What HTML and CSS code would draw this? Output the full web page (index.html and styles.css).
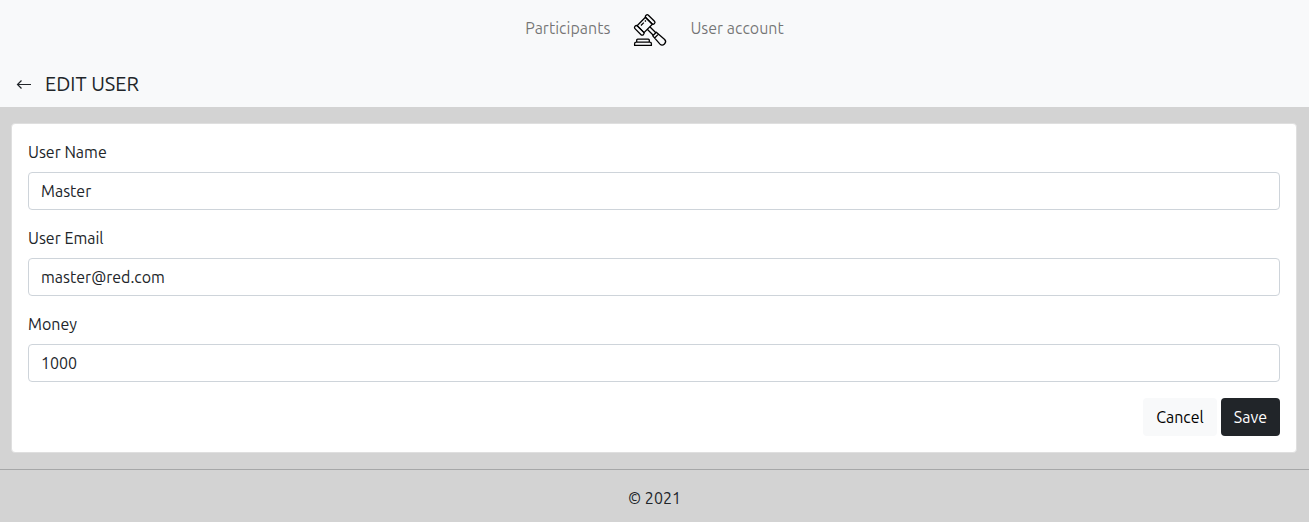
FILE: index.html
```
<!DOCTYPE html>
<html lang="en">
<head>
  <meta charset="utf-8">
  <meta name="viewport" content="width=device-width, initial-scale=1">
  <title>Edit user</title>
  <link rel="stylesheet" href="styles.css">
</head>
<body>
  <header class="header">
    <nav class="nav">
      <a class="nav-link" href="#">Participants</a>
      <a class="brand" href="#" aria-label="Home">
        <svg class="brand-icon" viewBox="0 0 32 32" aria-hidden="true">
          <g transform="rotate(-45 11 10.5)">
            <rect x="1" y="4.700" width="3.600" height="11.800" rx="1.600"/>
            <rect x="16.400" y="4.700" width="3.600" height="11.800" rx="1.600"/>
            <rect x="4.600" y="5.700" width="11.800" height="9.800"/>
            <path d="M7.500 8.300h4M13 8.300h1.500"/>
            <path d="M9.200 15.500v8.500M12.800 15.500v8.500"/>
            <path d="M8.500 24h5l.8 11a3.300 3 0 0 1-6.600 0zM8.300 26.800h5.400"/>
          </g>
          <path d="M2.700 28.200v-2a1 1 0 0 1 1-1h10.600a1 1 0 0 1 1 1v2M.6 31.400v-1.600a1.600 1.600 0 0 1 1.600-1.600h13.600a1.600 1.600 0 0 1 1.600 1.600v1.600z"/>
        </svg>
      </a>
      <a class="nav-link" href="#">User account</a>
    </nav>
    <div class="title-bar">
      <a class="back" href="#" aria-label="Back">
        <svg class="back-icon" viewBox="0 0 16 16" aria-hidden="true"><path d="M15 8.500H1.500M5.500 4.500l-4 4 4 4"/></svg>
      </a>
      <h1 class="title">EDIT USER</h1>
    </div>
  </header>

  <main class="main">
    <form class="card">
      <div class="field">
        <label class="label" for="name">User Name</label>
        <input class="input" id="name" type="text" value="Master">
      </div>
      <div class="field">
        <label class="label" for="email">User Email</label>
        <input class="input" id="email" type="email" value="master@red.com">
      </div>
      <div class="field">
        <label class="label" for="money">Money</label>
        <input class="input" id="money" type="text" inputmode="numeric" value="1000">
      </div>
      <div class="actions">
        <button class="button button-light" type="button">Cancel</button>
        <button class="button button-dark" type="submit">Save</button>
      </div>
    </form>
  </main>

  <footer class="footer">© 2021</footer>
</body>
</html>
```
FILE: styles.css
```
* {
  box-sizing: border-box;
}

body {
  margin: 0;
  background: #d3d3d3;
  color: #212529;
  font-family: Ubuntu, "Noto Sans", sans-serif;
  font-size: 16px;
  line-height: 24px;
}

.header {
  background: #f8f9fa;
  padding: 8px 16px;
}

.nav {
  display: flex;
  justify-content: center;
  align-items: center;
  gap: 24px;
  height: 40px;
}

.nav-link {
  color: rgba(0, 0, 0, 0.55);
  text-decoration: none;
}

.brand {
  display: flex;
  padding-top: 4px;
}

.brand-icon {
  width: 32px;
  height: 32px;
  overflow: visible;
  fill: none;
  stroke: #000;
  stroke-width: 1.3;
  stroke-linejoin: round;
}

.title-bar {
  display: flex;
  align-items: center;
  gap: 13px;
  padding-top: 21px;
}

.back {
  display: flex;
}

.back-icon {
  width: 16px;
  height: 16px;
  fill: none;
  stroke: #212529;
  stroke-width: 1.2;
}

.title {
  margin: 0;
  font-size: 20px;
  font-weight: 400;
  line-height: 30px;
}

.main {
  padding: 16px 12px 16px 11px;
}

.card {
  display: flex;
  flex-direction: column;
  gap: 16px;
  padding: 16px;
  background: #fff;
  border: 1px solid #dfdfdf;
  border-radius: 4px;
}

.field {
  display: flex;
  flex-direction: column;
  gap: 8px;
}

.input {
  width: 100%;
  height: 38px;
  padding: 6px 12px;
  border: 1px solid #ced4da;
  border-radius: 4px;
  background: #fff;
  color: inherit;
  font: inherit;
}

.actions {
  display: flex;
  justify-content: flex-end;
  gap: 4px;
}

.button {
  padding: 6px 12px;
  border: 1px solid transparent;
  border-radius: 4px;
  font: inherit;
}

.button-light {
  background: #f8f9fa;
  color: #000;
}

.button-dark {
  background: #212529;
  color: #fff;
}

.footer {
  padding: 16px 12px 12px;
  border-top: 1px solid #a6a7a8;
  text-align: center;
}
```
